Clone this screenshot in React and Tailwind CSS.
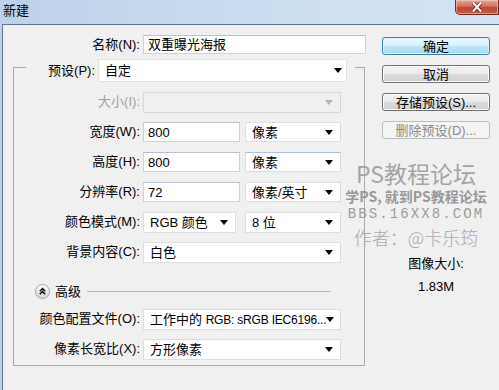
import React from "react";

const F = "font-['Liberation_Sans','Noto_Sans_CJK_SC',sans-serif]";

function Arrow({ disabled }) {
  return (
    <svg width="8" height="5" viewBox="0 0 8 5" className="shrink-0">
      <path d="M0 0H8L4 5Z" fill={disabled ? "#b4b4b4" : "#000"} />
    </svg>
  );
}

function Select({ className, text, disabled }) {
  return (
    <div
      className={
        "flex items-center justify-between pl-[6px] border " +
        (disabled ? "bg-[#f0f0f0] border-[#d9d9d9] " : "bg-white border-[#dedede] ") +
        className
      }
    >
      <span className="whitespace-nowrap leading-none">{text}</span>
      <Arrow disabled={disabled} />
    </div>
  );
}

function Input({ className, text }) {
  return (
    <div
      className={
        "flex items-center pl-[4px] bg-white border border-[#ccd3da] border-t-[#b9c2cc] " +
        className
      }
    >
      <span className="leading-none whitespace-nowrap">{text}</span>
    </div>
  );
}

function Row({ label, children, gray }) {
  return (
    <div className="flex items-center h-[20px] mt-[10px]">
      <div className={"w-[126px] text-right whitespace-nowrap " + (gray ? "text-[#a0a0a0]" : "text-black")}>
        {label}
      </div>
      <div className="ml-[3px] flex items-center">{children}</div>
    </div>
  );
}

function Btn({ children, kind }) {
  const cls =
    kind === "default"
      ? "border-[#3c7fb1] bg-[linear-gradient(#eaf6fd,#d9f0fc_50%,#bee6fd_50%,#a7d9f5)] text-black shadow-[inset_0_0_0_1px_#e0f3fc]"
      : kind === "disabled"
      ? "border-[#bcbfc2] bg-[#f4f4f4] text-[#8a8a8a]"
      : "border-[#707070] bg-[linear-gradient(#f2f2f2,#ebebeb_50%,#dddddd_50%,#cfcfcf)] text-black shadow-[inset_0_0_0_1px_#fbfbfb]";
  return (
    <div className={"h-[18px] rounded-[3px] border flex items-center justify-center leading-none " + cls}>
      {children}
    </div>
  );
}

export default function App() {
  return (
    <div
      className={
        "relative w-[499px] h-[390px] overflow-hidden text-[13px] text-black bg-[linear-gradient(90deg,#bcd2ea,#cddff1_60%,#d3e3f3)] " +
        F
      }
    >
      {/* title bar */}
      <div className="h-[24px] flex items-start justify-between">
        <div className="pl-[3px] pt-[3px] leading-[16px] text-[13px]">新建</div>
        <div className="w-[44px] h-[15px] rounded-bl-[5px] border border-t-0 border-[#6e2a20] bg-[linear-gradient(#e2a596,#d1715e_45%,#c2452f_55%,#c95a3f)] flex items-center justify-center shadow-[inset_0_0_0_1px_rgba(255,220,210,0.5)]">
          <svg width="12" height="10" viewBox="0 0 12 10">
            <path d="M2 0.5L10 9.5M10 0.5L2 9.5" stroke="#5a1a10" strokeWidth="3.6" />
            <path d="M2 0.5L10 9.5M10 0.5L2 9.5" stroke="#fff" strokeWidth="2.2" />
          </svg>
        </div>
      </div>

      {/* client area */}
      <div className="ml-[2px] h-[366px] border-l border-t border-[#64758a] bg-[#f0f0f0] flex">
        {/* left column */}
        <div className="w-[366px] flex flex-col pt-[10px]">
          <div className="flex items-center h-[19px]">
            <div className="w-[137px] text-right">名称(N):</div>
            <Input className="ml-[3px] w-[223px] h-[19px] border-[#a9c3de] border-t-[#9db7d3]" text="双重曝光海报" />
          </div>

          {/* group box */}
          <div className="mt-[13px] ml-[10px] w-[352px] border border-[#ababab] flex flex-col pb-[6px]">
            <div className="-mt-[9px] ml-[12px] w-fit flex items-center h-[23px] bg-[#f0f0f0] pr-[8px]">
              <div className="w-[69px] text-right">预设(P):</div>
              <Select className="ml-[3px] w-[249px] h-[23px] pr-[4px] border-[#e2e2e2]" text="自定" />
            </div>

            <Row label="大小(I):" gray>
              <Select className="w-[198px] h-[21px] pr-[7px]" text="" disabled />
            </Row>
            <Row label="宽度(W):">
              <Input className="w-[97px] h-[20px]" text="800" />
              <Select className="ml-[5px] w-[96px] h-[20px] pr-[7px]" text="像素" />
            </Row>
            <Row label="高度(H):">
              <Input className="w-[97px] h-[20px]" text="800" />
              <Select className="ml-[5px] w-[96px] h-[20px] pr-[7px] border-t-[#a9c3de]" text="像素" />
            </Row>
            <Row label="分辨率(R):">
              <Input className="w-[97px] h-[20px]" text="72" />
              <Select className="ml-[5px] w-[96px] h-[20px] pr-[7px]" text="像素/英寸" />
            </Row>
            <Row label="颜色模式(M):">
              <Select className="w-[93px] h-[21px] pr-[7px]" text="RGB 颜色" />
              <Select className="ml-[9px] w-[96px] h-[21px] pr-[7px]" text="8 位" />
            </Row>
            <Row label="背景内容(C):">
              <Select className="w-[198px] h-[21px] pr-[7px]" text="白色" />
            </Row>

            {/* advanced */}
            <div className="mt-[21px] ml-[21px] mr-[33px] h-[16px] flex items-center">
              <svg width="15" height="15" viewBox="0 0 15 15" className="shrink-0">
                <defs>
                  <linearGradient id="ag" x1="0" y1="0" x2="0" y2="1">
                    <stop offset="0" stopColor="#ffffff" />
                    <stop offset="1" stopColor="#d4d4d4" />
                  </linearGradient>
                </defs>
                <circle cx="7.5" cy="7.5" r="7" fill="url(#ag)" stroke="#a6a6a6" />
                <path d="M4.8 7.3L7.5 4.6L10.2 7.3M4.8 10.3L7.5 7.6L10.2 10.3" fill="none" stroke="#111" strokeWidth="1.5" />
              </svg>
              <span className="ml-[5px] leading-none">高级</span>
              <div className="ml-[6px] flex-1 h-px bg-[#b9b9b9]" />
            </div>

            <Row label="颜色配置文件(O):">
              <Select
                className="w-[198px] h-[21px] pr-[7px]"
                text={
                  <>
                    工作中的 <span className="text-[12px] tracking-[-0.2px]">RGB: sRGB IEC6196...</span>
                  </>
                }
              />
            </Row>
            <Row label="像素长宽比(X):">
              <Select className="w-[198px] h-[21px] pr-[7px]" text="方形像素" />
            </Row>
          </div>
        </div>

        {/* right column */}
        <div className="ml-[13px] w-[108px] flex flex-col pt-[12px]">
          <div className="flex flex-col gap-[10px]">
            <Btn kind="default">确定</Btn>
            <Btn>取消</Btn>
            <Btn>存储预设(S)...</Btn>
            <Btn kind="disabled">删除预设(D)...</Btn>
          </div>
          <div className="mt-[116px] text-center leading-[17px]">图像大小:</div>
          <div className="mt-[6px] text-center leading-[17px]">1.83M</div>
        </div>
      </div>

      {/* watermark overlay */}
      <div className="absolute left-[346px] top-[162px] w-[140px] flex flex-col items-center pointer-events-none">
        <div className="text-[23px] leading-[23px] text-[#9a9a9a]/90 whitespace-nowrap font-['Noto_Sans_CJK_SC',sans-serif]">
          PS教程论坛
        </div>
        <div className="mt-[4px] text-[14px] leading-[15px] font-bold text-[#8d8d8d]/90 whitespace-nowrap font-['Noto_Sans_CJK_SC',sans-serif]">
          学PS, 就到PS教程论坛
        </div>
        <div className="mt-[2px] text-[14px] leading-[16px] tracking-[2.1px] text-[#9c9c9c] whitespace-nowrap font-['Liberation_Mono',monospace]">
          BBS.16XX8.COM
        </div>
        <div className="mt-[5px] text-[18px] leading-[20px] text-[#ababab] whitespace-nowrap font-['Noto_Sans_CJK_SC',sans-serif] font-light">
          作者：@卡乐筠
        </div>
      </div>
    </div>
  );
}
